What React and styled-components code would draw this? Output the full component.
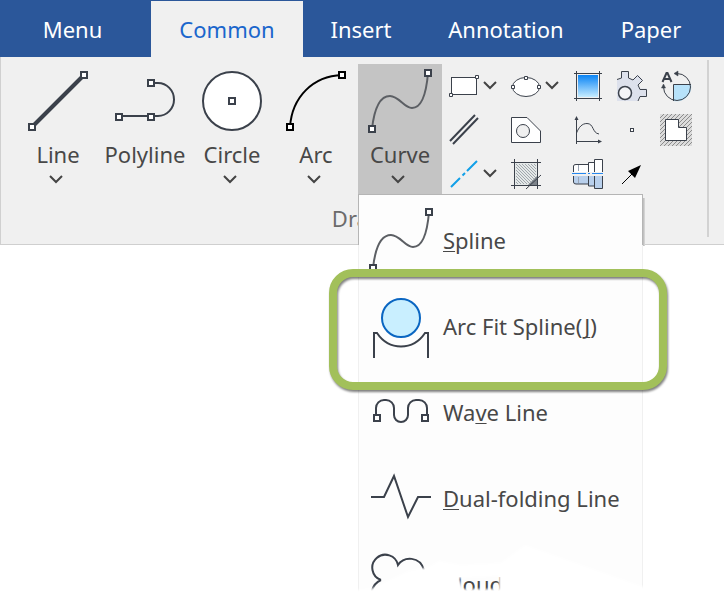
import React from 'react';
import styled, { createGlobalStyle, css } from 'styled-components';

const INK = '#3b414b';

const GlobalStyle = createGlobalStyle`
  * {
    box-sizing: border-box;
  }

  body {
    margin: 0;
    background: #ffffff;
    font-family: 'Noto Sans', 'Open Sans', sans-serif;
    overflow: hidden;
  }

  button {
    font: inherit;
    color: inherit;
    border: 0;
    padding: 0;
    background: none;
    cursor: pointer;
  }

  svg {
    display: block;
    flex: none;
  }
`;

const Page = styled.main`
  min-height: 100vh;
  overflow: hidden;
  font-size: 22px;
  line-height: 32px;
  color: #484848;
`;

const TabBar = styled.nav`
  display: flex;
  height: 57px;
  padding-top: 1px;
  background: #2b579a;
`;

const Tab = styled.button`
  width: ${({ $wide }) => ($wide ? 174 : 116)}px;
  color: #ffffff;
  white-space: nowrap;

  ${({ $file }) => $file && css`
    width: 145px;
    margin-right: 6px;
  `}

  ${({ $active }) => $active && css`
    width: 152px;
    color: #1a66cc;
    background: #f0f0f0;
  `}
`;

const Ribbon = styled.section`
  display: flex;
  height: 188px;
  padding: 3px 0 7px;
  background: #f0f0f0;
  border-left: 1px solid #d0d0d0;
  border-bottom: 1px solid #cfcfcf;
`;

const Group = styled.div`
  padding: 4px 15px 0;
  border-right: 2px solid #d2d2d2;
`;

const GroupTools = styled.div`
  display: flex;
`;

const GroupName = styled.div`
  padding: 8px 0 0 10px;
  text-align: center;
  color: #6b6b6b;
`;

const LargeTool = styled.button`
  display: flex;
  flex-direction: column;
  align-items: center;
  width: ${({ $wide }) => ($wide ? 90 : 84)}px;
  height: 130px;
  padding-top: 5px;
  background: ${({ $open }) => ($open ? '#c4c4c4' : 'none')};
`;

const LargeLabel = styled.span`
  margin-top: 5px;
`;

const LargeArrow = styled.span`
  margin-top: 5px;
  padding-right: 4px;
`;

const SmallTools = styled.div`
  display: grid;
  grid-template-columns: 50px 50px 32px 32px 32px;
  grid-auto-rows: 32px;
  gap: 12px;
  padding: 6px 0 0 6px;
`;

const SmallTool = styled.button`
  display: flex;
  align-items: center;
`;

const MenuAnchor = styled.div`
  position: relative;
`;

const DropMenu = styled.div`
  position: absolute;
  top: 100%;
  left: 0;
  z-index: 1;
  width: 285px;
  padding: 2px 0;
  background: #fdfdfd;
  border: 1px solid;
  border-image: linear-gradient(#b5b5b5 51px, #f0f0f0 51px) 1;

  &::before {
    content: '';
    position: absolute;
    top: 3px;
    right: -3px;
    width: 2px;
    height: 48px;
    background: linear-gradient(90deg, #b8b8b8, #dcdcdc);
  }
`;

const MenuItem = styled.button`
  position: relative;
  display: flex;
  align-items: center;
  gap: 10px;
  width: 100%;
  height: 86px;
  padding-left: 10px;
  text-align: left;
  white-space: nowrap;

  u {
    text-decoration-thickness: 1px;
    text-underline-offset: 2px;
    text-decoration-skip-ink: none;
  }
`;

const Highlight = styled.span`
  position: absolute;
  z-index: 1;
  top: -14px;
  right: -25px;
  bottom: -21px;
  left: -30px;
  border: 8px solid #a2c05a;
  border-radius: 24px;
  filter: drop-shadow(1px 2px 1px rgba(0, 0, 0, 0.5));
  pointer-events: none;
`;

const Fade = styled.svg`
  position: absolute;
  left: -10px;
  bottom: 0;
  pointer-events: none;
`;

const Handle = ({ x, y, color = INK }) => (
  <rect x={x - 3} y={y - 3} width="6" height="6" fill="#fff" stroke={color} strokeWidth="2" />
);

const Icon = ({ size = 64, children }) => (
  <svg
    width={size}
    height={size}
    viewBox={`0 0 ${size} ${size}`}
    fill="none"
    stroke={INK}
    strokeWidth={size === 64 ? 2 : 1}
    aria-hidden="true"
  >
    {children}
  </svg>
);

const Chevron = ({ width = 14 }) => (
  <svg width={width} height="10" viewBox={`0 0 ${width} 10`} fill="none" aria-hidden="true">
    <path
      d={`M${width / 2 - 6} 1L${width / 2} 7L${width / 2 + 6} 1`}
      stroke="#444444"
      strokeWidth="2"
    />
  </svg>
);

const LineIcon = () => (
  <Icon>
    <path d="M6 58L58 6" strokeWidth="4" />
    <Handle x={6} y={58} />
    <Handle x={58} y={6} />
  </Icon>
);

const PolylineIcon = () => (
  <Icon>
    <path d="M6 47H45A16 16.5 0 0 0 45 14H38" />
    <Handle x={6} y={48} />
    <Handle x={38} y={48} />
    <Handle x={38} y={14} />
  </Icon>
);

const CircleIcon = () => (
  <Icon>
    <circle cx="32" cy="32" r="29" fill="#fff" />
    <Handle x={32} y={32} />
  </Icon>
);

const ArcIcon = () => (
  <Icon>
    <path d="M6 58C8 28 29 7 58 6" stroke="#000" />
    <Handle x={6} y={58} color="#000" />
    <Handle x={58} y={6} color="#000" />
  </Icon>
);

const SplineIcon = () => (
  <Icon>
    <path d="M4 60C7 33 15 27 22 27C31 27 36 39 44 39C53 39 58 28 60 4" stroke="#5c5f64" />
    <Handle x={4} y={60} />
    <Handle x={60} y={4} />
  </Icon>
);

const ArcFitIcon = () => (
  <Icon>
    <circle cx="32" cy="24" r="19" fill="#c9efff" stroke="#0a66c2" />
    <path d="M5 64V39H8C20 57 44 57 56 39H59V64" />
  </Icon>
);

const WaveIcon = () => (
  <Icon>
    <path d="M7 35V28A8 8 0 0 1 15 20H17A8 8 0 0 1 25 28V35A7 7 0 0 0 39 35V28A8 8 0 0 1 47 20H50A8 8 0 0 1 58 28V35" />
    <Handle x={8} y={38} />
    <Handle x={56} y={38} />
  </Icon>
);

const FoldIcon = () => (
  <Icon>
    <path d="M2 31H15L25 10L39 51L49 31H62" />
  </Icon>
);

const CloudIcon = () => (
  <Icon>
    <path d="M12 28A13 13 0 1 1 29 13C35 4 51 4 55 18M12 28Q5 31 3 39" />
  </Icon>
);

const RectIcon = () => (
  <Icon size={32}>
    <rect x="3.5" y="7.5" width="25" height="17" fill="#fff" />
    <path d="M1.500 23.500h3v3h-3zM27.500 5.500h3v3h-3z" fill="#fff" />
  </Icon>
);

const EllipseIcon = () => (
  <Icon size={32}>
    <ellipse cx="16" cy="17" rx="13.500" ry="9.500" fill="#fff" />
    <path d="M1.500 15.500h3v3h-3zM27.500 15.500h3v3h-3zM14.500 6.500h3v3h-3z" fill="#fff" />
  </Icon>
);

const GradientIcon = () => (
  <Icon size={32}>
    <defs>
      <linearGradient id="sky" x1="0" y1="0" x2="0" y2="1">
        <stop offset="0" stopColor="#0a84f5" />
        <stop offset="1" stopColor="#c6ecff" />
      </linearGradient>
    </defs>
    <rect x="6" y="5" width="20" height="22" fill="url(#sky)" stroke="none" />
    <path d="M4.500 1v30M27.500 1v30M2 3.500h28M2 28.500h28" />
  </Icon>
);

const GearIcon = () => (
  <Icon size={32}>
    <path
      d="M1 10L5 8V1.500H13V8L17 10L22 5L27 10L22 15L24 18.500H31V26.500H24L22 31H1Z"
      fill="#dde1ec"
      stroke="none"
    />
    <path d="M1 9.500L5.500 8V1.500H12.500V8L17 10L21.500 5.500L26.500 10.500L22 15L24 19.500H30.500V26.500H24L22 31" />
    <circle cx="9" cy="23" r="6.500" fill="#f4f5f8" strokeWidth="1.500" />
  </Icon>
);

const RotateIcon = () => (
  <Icon size={32}>
    <path d="M14 14H31A14.500 14.500 0 0 1 14 31Z" fill="#b7e2fa" stroke="none" />
    <path d="M17 3.500A13.500 13.500 0 1 1 3.500 17M13.500 31V14.500H31" />
    <path d="M14 3.500L18 1V6ZM3.500 14L1.500 18H5.500Z" fill={INK} strokeWidth="0.500" />
    <path d="M2.500 12L6.500 3H7.500L11.500 12M4.500 9H9.500" strokeWidth="2" />
  </Icon>
);

const ParallelIcon = () => (
  <Icon size={32}>
    <path d="M2 27L27 1M5 30L30 4" strokeWidth="2" />
  </Icon>
);

const PlateIcon = () => (
  <Icon size={32}>
    <path d="M1.500 3.500H17L30.500 17V28.500H1.500Z" fill="#fff" />
    <circle cx="13" cy="17" r="6.500" fill="#f0f0f0" />
  </Icon>
);

const ChartIcon = () => (
  <Icon size={32}>
    <path d="M4.500 30V4M4 27.500H29M4.500 19C7 13 10 9.500 15 9.500C22 9.500 20 19 27 20" />
    <path d="M4.500 2L2.500 6H6.500ZM30 27.500L26 25.500V29.500Z" fill={INK} stroke="none" />
  </Icon>
);

const PointIcon = () => (
  <Icon size={32}>
    <rect x="14.500" y="14.500" width="3" height="3" fill="#fff" />
  </Icon>
);

const RegionIcon = () => (
  <Icon size={32}>
    <defs>
      <pattern id="hatch" width="4" height="4" patternUnits="userSpaceOnUse">
        <path d="M-1 1L1 -1M0 4L4 0M3 5L5 3" stroke="#8d8d8d" />
      </pattern>
    </defs>
    <rect width="32" height="32" fill="#dcdcdc" stroke="none" />
    <rect width="32" height="32" fill="url(#hatch)" stroke="none" />
    <path d="M5.500 5.500H18.500V13.500H26.500V26.500H5.500Z" fill="#fff" />
  </Icon>
);

const CenterLineIcon = () => (
  <Icon size={32}>
    <path d="M3 29L12 20M19 13L29 3M14.500 17.500L17 15" stroke="#12a0e8" strokeWidth="2" />
  </Icon>
);

const HatchIcon = () => (
  <Icon size={32}>
    <defs>
      <pattern id="fill" width="3" height="3" patternUnits="userSpaceOnUse">
        <path d="M0 0L3 3" stroke="#a0a7ad" />
      </pattern>
    </defs>
    <rect x="4" y="4" width="24" height="24" fill="#e4e8e8" stroke="none" />
    <rect x="6" y="6" width="20" height="20" fill="url(#fill)" stroke="none" />
    <path d="M4.500 1v30M27.500 1v30M1 4.500h30M1 27.500h30" />
    <path d="M27 18V27H18Z" fill="#7d838a" stroke="none" />
    <path d="M16 31L31 17" />
  </Icon>
);

const ShaftIcon = () => (
  <Icon size={32}>
    <path d="M1.500 14V8Q1.500 6.500 4 6.500H16.500V4.500H22.500V1.500H30.500V14" fill="#fff" />
    <path d="M1.500 18V24Q1.500 26 4 26H16.500V28H22.500V30.500H30.500V18" fill="#b9d0ec" />
    <path d="M16.500 6V14M22.500 4V14M16.500 18V27M22.500 18V29" />
    <path d="M6.500 7V13M6.500 19V25" stroke="#9aa4b4" />
    <path d="M0 14H32V18H0Z" fill="#f0f0f0" stroke="none" />
    <path d="M0 15.500H14M16 15.500H18M20 15.500H31" stroke="#2488f0" />
  </Icon>
);

const ArrowIcon = () => (
  <Icon size={32}>
    <path d="M6 26L16 16" stroke="#000" />
    <path d="M25 7L12 13L19 20Z" fill="#000" stroke="none" />
  </Icon>
);

const tabs = [
  { name: 'Menu', file: true },
  { name: 'Common', active: true },
  { name: 'Insert' },
  { name: 'Annotation', wide: true },
  { name: 'Paper' },
];

const largeTools = [
  { name: 'Line', Art: LineIcon, arrow: true },
  { name: 'Polyline', Art: PolylineIcon, wide: true },
  { name: 'Circle', Art: CircleIcon, arrow: true },
  { name: 'Arc', Art: ArcIcon, arrow: true },
];

const smallTools = [
  { name: 'Rectangle', Art: RectIcon, arrow: true },
  { name: 'Ellipse', Art: EllipseIcon, arrow: true },
  { name: 'Gradient', Art: GradientIcon },
  { name: 'Gear', Art: GearIcon },
  { name: 'Rotate', Art: RotateIcon },
  { name: 'Parallel lines', Art: ParallelIcon },
  { name: 'Plate', Art: PlateIcon },
  { name: 'Function curve', Art: ChartIcon },
  { name: 'Point', Art: PointIcon },
  { name: 'Region', Art: RegionIcon },
  { name: 'Center line', Art: CenterLineIcon, arrow: true },
  { name: 'Hatch', Art: HatchIcon },
  { name: 'Shaft', Art: ShaftIcon },
  { name: 'Arrow', Art: ArrowIcon },
];

const menuItems = [
  { Art: SplineIcon, text: <span><u>S</u>pline</span> },
  { Art: ArcFitIcon, text: <span>Arc Fit Spline(<u>J</u>)</span>, marked: true },
  { Art: WaveIcon, text: <span>Wa<u>v</u>e Line</span> },
  { Art: FoldIcon, text: <span><u>D</u>ual-folding Line</span> },
  { Art: CloudIcon, text: <span>Cloud</span> },
];

const App = () => {
  return (
    <>
      <GlobalStyle />
      <Page>
        <TabBar>
          {tabs.map((tab) => (
            <Tab key={tab.name} $file={tab.file} $active={tab.active} $wide={tab.wide}>
              {tab.name}
            </Tab>
          ))}
        </TabBar>
        <Ribbon>
          <Group>
            <GroupTools>
              {largeTools.map(({ name, Art, arrow, wide }) => (
                <LargeTool key={name} $wide={wide}>
                  <Art />
                  <LargeLabel>{name}</LargeLabel>
                  {arrow && <LargeArrow><Chevron /></LargeArrow>}
                </LargeTool>
              ))}
              <MenuAnchor>
                <LargeTool $open aria-expanded="true">
                  <SplineIcon />
                  <LargeLabel>Curve</LargeLabel>
                  <LargeArrow><Chevron /></LargeArrow>
                </LargeTool>
                <DropMenu>
                  {menuItems.map(({ Art, text, marked }, i) => (
                    <MenuItem key={i}>
                      <Art />
                      {text}
                      {marked && <Highlight />}
                    </MenuItem>
                  ))}
                  {/* torn lower edge of the list */}
                  <Fade width="310" height="90" viewBox="0 0 310 90" aria-hidden="true">
                    <defs>
                      <filter id="soft" x="-10%" y="-10%" width="120%" height="120%">
                        <feGaussianBlur stdDeviation="1" />
                      </filter>
                    </defs>
                    <path
                      d="M-10 52L22 50L36 43L60 32L80 28L90 22L112 26L152 24L176 6L300 50V110H-10ZM110 39L150 37V50H114Z"
                      fill="#fff"
                      fillRule="evenodd"
                      filter="url(#soft)"
                    />
                  </Fade>
                </DropMenu>
              </MenuAnchor>
              <SmallTools>
                {smallTools.map(({ name, Art, arrow }) => (
                  <SmallTool key={name} aria-label={name}>
                    <Art />
                    {arrow && <Chevron width={20} />}
                  </SmallTool>
                ))}
              </SmallTools>
            </GroupTools>
            <GroupName>Draw</GroupName>
          </Group>
        </Ribbon>
      </Page>
    </>
  );
};

export default App;
